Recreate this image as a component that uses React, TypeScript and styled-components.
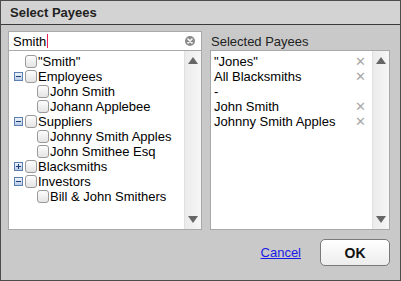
import React from "react";
import styled, { createGlobalStyle } from "styled-components";

const Global = createGlobalStyle`
  html, body { margin: 0; padding: 0; }
  body { font-family: "Liberation Sans", Arial, sans-serif; font-size: 13px; color: #000; }
  * { box-sizing: border-box; }
`;

const Window = styled.div`
  width: 401px;
  height: 281px;
  border: 1px solid #4d4d4d;
  background: #c9c9c9;
  display: flex;
  flex-direction: column;
`;

const TitleBar = styled.div`
  height: 24px;
  flex: none;
  background: #d3d3d3;
  border-bottom: 1px solid #3a3a3a;
  display: flex;
  align-items: center;
  padding-left: 9px;
  font-weight: bold;
  font-size: 13px;
  color: #222;
`;

const Body = styled.div`
  display: flex;
  gap: 8px;
  padding: 6px 9px 0 7px;
`;

const Column = styled.div<{ $w: number }>`
  width: ${(p) => p.$w}px;
  display: flex;
  flex-direction: column;
`;

const SearchBox = styled.div`
  height: 19px;
  background: #fff;
  border: 1px solid #a9a9a9;
  border-bottom: none;
  display: flex;
  align-items: center;
  padding: 0 6px 0 4px;
  font-size: 13px;
`;

const Caret = styled.span`
  display: inline-block;
  width: 1px;
  height: 14px;
  background: #ee2255;
  margin-left: 1px;
`;

const SearchText = styled.span`
  flex: 1;
  display: flex;
  align-items: center;
`;

const ClearBtn = styled.span`
  width: 10px;
  height: 10px;
  border-radius: 50%;
  background: #8a8a8a;
  display: flex;
  align-items: center;
  justify-content: center;
`;

const Label = styled.div`
  height: 19px;
  display: flex;
  align-items: flex-end;
  padding-left: 1px;
  padding-bottom: 1px;
  font-size: 13px;
  color: #222;
`;

const ListBox = styled.div`
  height: 180px;
  background: #fff;
  border: 1px solid #a9a9a9;
  display: flex;
`;

const ListContent = styled.div<{ $pl: number }>`
  flex: 1;
  padding: 3px 0 0 ${(p) => p.$pl}px;
  display: flex;
  flex-direction: column;
`;

const Scrollbar = styled.div`
  width: 17px;
  flex: none;
  background: linear-gradient(to right, #ebebeb, #f6f6f6);
  border-left: 1px solid #e0e0e0;
  display: flex;
  flex-direction: column;
  justify-content: space-between;
  align-items: center;
  padding: 6px 0 6px;
`;

const Arrow = styled.span<{ $down?: boolean }>`
  width: 0;
  height: 0;
  border-left: 5px solid transparent;
  border-right: 5px solid transparent;
  ${(p) =>
    p.$down
      ? "border-top: 7px solid #666;"
      : "border-bottom: 7px solid #666;"}
`;

const Row = styled.div<{ $indent: number }>`
  height: 15px;
  display: flex;
  align-items: center;
  padding-left: ${(p) => p.$indent}px;
  white-space: nowrap;
  line-height: 15px;
`;

const ExpandSlot = styled.span`
  width: 11px;
  flex: none;
  display: flex;
  align-items: center;
`;

const Expander = styled.span`
  width: 9px;
  height: 9px;
  border: 1px solid #5b7fb0;
  background: linear-gradient(#eef3fa, #b9cce6);
  position: relative;
  display: inline-block;
`;

const Bar = styled.span<{ $v?: boolean }>`
  position: absolute;
  background: #1f3f74;
  ${(p) =>
    p.$v
      ? "left: 3px; top: 1px; width: 1px; height: 5px;"
      : "left: 1px; top: 3px; width: 5px; height: 1px;"}
`;

const Check = styled.span`
  width: 12px;
  height: 13px;
  flex: none;
  border: 1px solid #999;
  border-radius: 3px;
  background: linear-gradient(#fdfdfd, #e4e4e4);
  margin-right: 1px;
`;

const SelRow = styled.div`
  height: 15px;
  display: flex;
  align-items: center;
  justify-content: space-between;
  padding-right: 6px;
  white-space: nowrap;
`;

const Remove = styled.span`
  color: #a8a8a8;
  font-size: 13px;
  line-height: 1;
`;

const Footer = styled.div`
  display: flex;
  justify-content: flex-end;
  align-items: center;
  padding: 9px 10px 0 0;
  gap: 19px;
`;

const LinkBtn = styled.a`
  color: #1a1ae6;
  text-decoration: underline;
  font-size: 13px;
  cursor: pointer;
`;

const OkBtn = styled.button`
  width: 70px;
  height: 27px;
  border: 1px solid #7a7a7a;
  border-radius: 5px;
  background: linear-gradient(#ffffff, #ededed);
  font-family: "Liberation Sans", Arial, sans-serif;
  font-weight: bold;
  font-size: 14px;
  color: #111;
  padding: 0;
`;

type Node = { label: string; level: 0 | 1; exp?: "minus" | "plus" };

const tree: Node[] = [
  { label: '"Smith"', level: 0 },
  { label: "Employees", level: 0, exp: "minus" },
  { label: "John Smith", level: 1 },
  { label: "Johann Applebee", level: 1 },
  { label: "Suppliers", level: 0, exp: "minus" },
  { label: "Johnny Smith Apples", level: 1 },
  { label: "John Smithee Esq", level: 1 },
  { label: "Blacksmiths", level: 0, exp: "plus" },
  { label: "Investors", level: 0, exp: "minus" },
  { label: "Bill & John Smithers", level: 1 },
];

const selected = [
  { label: '"Jones"', x: true },
  { label: "All Blacksmiths", x: true },
  { label: "-", x: false },
  { label: "John Smith", x: true },
  { label: "Johnny Smith Apples", x: true },
];

export default function App() {
  return (
    <>
      <Global />
      <Window>
        <TitleBar>Select Payees</TitleBar>
        <Body>
          <Column $w={194}>
            <SearchBox>
              <SearchText>
                Smith
                <Caret />
              </SearchText>
              <ClearBtn>
                <svg width="6" height="6" viewBox="0 0 6 6">
                  <path d="M1 1L5 5M5 1L1 5" stroke="#fff" strokeWidth="1.6" strokeLinecap="round" />
                </svg>
              </ClearBtn>
            </SearchBox>
            <ListBox>
              <ListContent $pl={5}>
                {tree.map((n) => (
                  <Row key={n.label} $indent={n.level === 1 ? 23 : 0}>
                    {n.level === 0 && (
                      <ExpandSlot>
                        {n.exp && (
                          <Expander>
                            <Bar />
                            {n.exp === "plus" && <Bar $v />}
                          </Expander>
                        )}
                      </ExpandSlot>
                    )}
                    <Check />
                    {n.label}
                  </Row>
                ))}
              </ListContent>
              <Scrollbar>
                <Arrow />
                <Arrow $down />
              </Scrollbar>
            </ListBox>
          </Column>
          <Column $w={180}>
            <Label>Selected Payees</Label>
            <ListBox>
              <ListContent $pl={3}>
                {selected.map((s) => (
                  <SelRow key={s.label}>
                    <span>{s.label}</span>
                    {s.x && <Remove>✕</Remove>}
                  </SelRow>
                ))}
              </ListContent>
              <Scrollbar>
                <Arrow />
                <Arrow $down />
              </Scrollbar>
            </ListBox>
          </Column>
        </Body>
        <Footer>
          <LinkBtn>Cancel</LinkBtn>
          <OkBtn>OK</OkBtn>
        </Footer>
      </Window>
    </>
  );
}
